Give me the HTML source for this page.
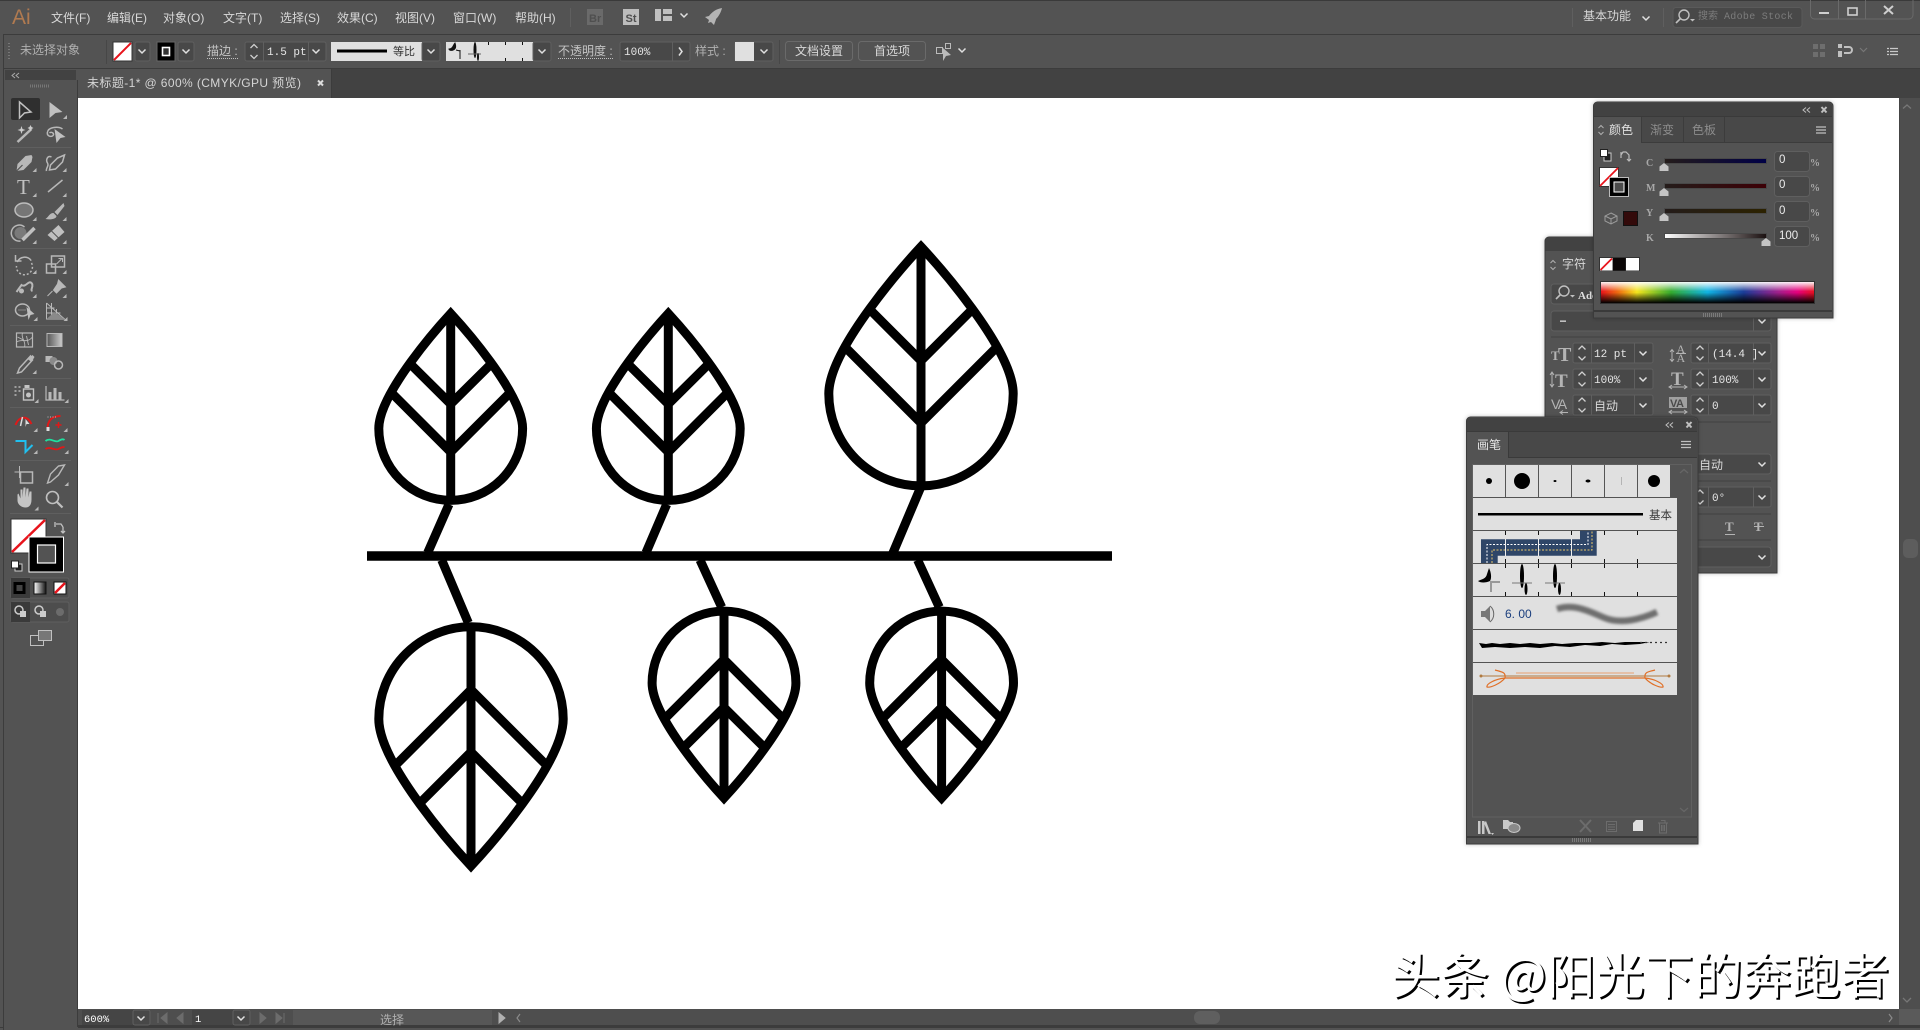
<!DOCTYPE html>
<html lang="zh-CN"><head><meta charset="utf-8"><title>Illustrator</title>
<style>
html,body{margin:0;padding:0;width:1920px;height:1030px;overflow:hidden;background:#535353}
svg{display:block;position:absolute;left:0;top:0}
text{font-family:"Liberation Sans","Noto Sans CJK SC",sans-serif;font-size:12px;fill:#d8d8d8}
.g{fill:#b0b0b0}
.d{fill:#8c8c8c}
.o{font-family:"Liberation Mono","Noto Sans CJK SC",monospace;font-size:11px;fill:#e6e6e6}
.v{font-size:11.5px;fill:#ececec}
.l{font-family:"Liberation Serif",serif;font-size:10px;font-weight:bold;fill:#a8a8a8}
.b{fill:#484848;stroke:#5f5f5f;stroke-width:1}
.s{fill:none;stroke:#b8b8b8;stroke-width:1.5}
.f{fill:#b8b8b8}
.leaf{fill:none;stroke:#000;stroke-width:9;stroke-miterlimit:10}
.wm{font-family:"Noto Sans CJK SC",sans-serif;font-size:49px;fill:#fff}
</style></head><body>
<svg width="1920" height="1030" viewBox="0 0 1920 1030" xmlns="http://www.w3.org/2000/svg">
<defs>
<path id="c" d="M-3.5,-1.5L0,2L3.5,-1.5" fill="none" stroke="#e0e0e0" stroke-width="1.5"/>
<g id="st"><path d="M-3.5,-3.5L0,-7L3.5,-3.5" fill="none" stroke="#d0d0d0" stroke-width="1.3"/><path d="M-3.5,3.5L0,7L3.5,3.5" fill="none" stroke="#d0d0d0" stroke-width="1.3"/></g>
<path id="t" d="M4,0V4H0Z" fill="#b8b8b8"/>
<g id="hb"><path d="M0,0.5H10M0,3.5H10M0,6.5H10" stroke="#c0c0c0" stroke-width="1.2" fill="none"/></g>
<g id="ud"><path d="M-2.5,-2L0,-4.5L2.5,-2M-2.5,2L0,4.5L2.5,2" fill="none" stroke="#b0b0b0" stroke-width="1"/></g>
<g id="mag"><circle cx="0" cy="0" r="5" fill="none" stroke="#c0c0c0" stroke-width="1.4"/><path d="M-3.5,3.5L-8,8" stroke="#c0c0c0" stroke-width="1.6"/><path d="M6,4h5l-2.5,2.5z" fill="#c0c0c0"/></g>
<g id="thumb"><path d="M0,0L4.5,3.5V8H-4.5V3.5Z" fill="#c4c4c4"/></g>
<g id="lm" class="leaf">
<path d="M450.7 313.5C441 324 378.8 393 378.8 428.5A71.9 71.9 0 0 0 522.6 428.5C522.6 393 460.4 324 450.7 313.5Z"/>
<path d="M450.7 313.5V500M411.7 365.3L450.7 404L489.7 365.3M391.7 393L450.7 452L509.7 393"/>
</g>
<g id="lb" class="leaf">
<path d="M471 866C458 852 378.8 764.500 378.8 719A92.2 92.2 0 0 1 563.2 719C563.2 764.500 484 852 471 866Z"/>
<path d="M471 866V627M396.7 764L471 689.7L545.3 764M421 802L471 752L521 802"/>
</g>
<linearGradient id="gC"><stop offset="0" stop-color="#241c1a"/><stop offset="1" stop-color="#000046"/></linearGradient>
<linearGradient id="gM"><stop offset="0" stop-color="#241c1a"/><stop offset="1" stop-color="#3c0006"/></linearGradient>
<linearGradient id="gY"><stop offset="0" stop-color="#241c1a"/><stop offset="1" stop-color="#2c2200"/></linearGradient>
<linearGradient id="gK"><stop offset="0" stop-color="#fff"/><stop offset="1" stop-color="#1a1010"/></linearGradient>
<linearGradient id="hue"><stop offset="0" stop-color="#e8101c"/><stop offset=".08" stop-color="#f06a10"/><stop offset=".17" stop-color="#f5e61e"/><stop offset=".33" stop-color="#35ac2f"/><stop offset=".5" stop-color="#10b4e4"/><stop offset=".67" stop-color="#1b3c98"/><stop offset=".83" stop-color="#a0208c"/><stop offset=".92" stop-color="#e6007e"/><stop offset="1" stop-color="#e8101c"/></linearGradient>
<linearGradient id="vw" x2="0" y2="1"><stop offset="0" stop-color="#fff" stop-opacity=".95"/><stop offset=".45" stop-color="#fff" stop-opacity="0"/><stop offset=".5" stop-color="#000" stop-opacity="0"/><stop offset="1" stop-color="#000"/></linearGradient>
<linearGradient id="gr"><stop offset="0" stop-color="#555"/><stop offset="1" stop-color="#ccc"/></linearGradient>
<linearGradient id="gr2"><stop offset="0" stop-color="#fff"/><stop offset="1" stop-color="#111"/></linearGradient>
<filter id="bl" x="-5%" y="-50%" width="110%" height="200%"><feGaussianBlur stdDeviation="1.3"/></filter>
<filter id="ps" x="-20%" y="-20%" width="140%" height="140%"><feDropShadow dx="0" dy="0" stdDeviation="2" flood-color="#000" flood-opacity=".25"/></filter>
</defs>

<!-- window chrome -->
<rect width="1920" height="1030" fill="#535353"/>
<rect x="0" y="0" width="1920" height="1" fill="#3a3a3a"/>
<rect x="3" y="34" width="1917" height="1" fill="#3c3c3c"/>
<rect x="3" y="68" width="1917" height="1" fill="#3c3c3c"/>
<rect x="78" y="69" width="1842" height="29" fill="#424242"/>
<rect x="78" y="69" width="253" height="29" fill="#535353"/>
<rect x="331" y="69" width="1" height="29" fill="#3c3c3c"/>
<rect x="3" y="34" width="1" height="996" fill="#3c3c3c"/>
<rect x="0" y="1027" width="1920" height="1" fill="#3c3c3c"/>

<!-- menu -->
<text x="12" y="24" style="font-size:21px;font-family:'Liberation Sans';fill:#b07a50">Ai</text>
<text x="51" y="22">文件(F)</text><text x="107" y="22">编辑(E)</text><text x="163" y="22">对象(O)</text><text x="223" y="22">文字(T)</text><text x="280" y="22">选择(S)</text><text x="337" y="22">效果(C)</text><text x="395" y="22">视图(V)</text><text x="453" y="22">窗口(W)</text><text x="515" y="22">帮助(H)</text>
<rect x="570" y="8" width="1" height="19" fill="#5f5f5f"/>
<rect x="587" y="9" width="16" height="16" fill="#6a6a6a"/><text x="589" y="22" style="font-size:11px;font-weight:bold;fill:#4f4f4f">Br</text>
<rect x="623" y="9" width="16" height="16" fill="#bdbdbd"/><text x="625.500" y="22" style="font-size:11px;font-weight:bold;fill:#4f4f4f">St</text>
<path d="M655,9h6v12h-6zM663,9h9v5h-9zM663,16h9v5h-9z" fill="#c0c0c0"/><use href="#c" x="684" y="15"/>
<path d="M722,8C716,9 712,12 709,16L705,17L709,20L708,23L711,22L714,25C715,22 716,20 716,19C719,16 721,12 722,8Z" fill="#b4b4b4"/>
<rect x="1572" y="8" width="1" height="19" fill="#5f5f5f"/>
<text x="1583" y="20">基本功能</text><use href="#c" x="1646" y="18"/>
<rect x="1663" y="8" width="1" height="19" fill="#5f5f5f"/>
<rect x="1673" y="7.500" width="129" height="20" rx="3" fill="#484848" stroke="#5a5a5a"/>
<use href="#mag" x="1684" y="15"/>
<text x="1698" y="19" style="font-size:10px;fill:#7c7c7c">搜索</text><text x="1724" y="19" class="o" style="font-size:10px;fill:#7c7c7c;letter-spacing:.3px">Adobe Stock</text>
<path d="M1810.500,0V15a4,4 0 0 0 4,4H1909a4,4 0 0 0 4,-4V0" fill="none" stroke="#6a6a6a"/>
<path d="M1838.500,0V19M1865.500,0V19" stroke="#6a6a6a"/>
<rect x="1819" y="12" width="10" height="2" fill="#cfcfcf"/>
<rect x="1848" y="8" width="9" height="7" fill="none" stroke="#cfcfcf" stroke-width="1.6"/>
<path d="M1884,6L1893,14M1893,6L1884,14" stroke="#cfcfcf" stroke-width="2"/>

<!-- control bar -->
<path d="M9,43V60" stroke="#777" stroke-width="2" stroke-dasharray="1 2"/>
<text x="20" y="54" class="g">未选择对象</text>
<rect x="106" y="40" width="1" height="24" fill="#474747"/>
<rect x="113" y="42" width="19" height="19" fill="#fff" stroke="#333"/><path d="M114,60L131,43" stroke="#e8141c" stroke-width="2"/>
<rect x="135" y="42" width="15" height="19" rx="2" class="b"/><use href="#c" x="142" y="51"/>
<rect x="157" y="42" width="18" height="19" fill="#000" stroke="#666"/><rect x="162.500" y="47.500" width="7" height="8" fill="#333" stroke="#fff" stroke-width="1.6"/>
<rect x="178" y="42" width="16" height="19" rx="2" class="b"/><use href="#c" x="186" y="51"/>
<text x="207" y="55" style="fill:#c4c4c4">描边 :</text><path d="M207,58.500H239" stroke="#c0c0c0" stroke-dasharray="1 1"/>
<rect x="245" y="42" width="81" height="19" rx="2" class="b"/><path d="M263.500,42V61M308.500,42V61" stroke="#5f5f5f"/>
<use href="#st" x="254" y="51.500"/><text x="267" y="55" class="o">1.5 pt</text><use href="#c" x="316" y="51"/>
<rect x="331" y="42" width="91" height="19" fill="#e0e0e0"/><rect x="337" y="49.500" width="50" height="3" fill="#000"/><text x="393" y="55" style="fill:#333;font-size:11px">等比</text>
<rect x="422" y="42" width="18" height="19" rx="2" class="b"/><use href="#c" x="431" y="51"/>
<rect x="446" y="42" width="87" height="19" fill="#e0e0e0"/>
<path d="M449,49C453,49 453,45 455,43C456,46 456,49 453,50C451,51 449,50 449,49ZM456,50L460,51M460,50V59" stroke="#111" fill="#111"/>
<ellipse cx="475" cy="50" rx="1.500" ry="8" fill="#111"/><path d="M468,54H481" stroke="#666"/><ellipse cx="478" cy="57" rx="1" ry="4" fill="#111"/>
<path d="M505.500,42V45M505.500,58V61M488.500,42V45M522.500,42V45M522.500,58V61" stroke="#111"/>
<rect x="533" y="42" width="18" height="19" rx="2" class="b"/><use href="#c" x="542" y="51"/>
<text x="558" y="55" style="fill:#c4c4c4">不透明度 :</text><path d="M558,58.500H614" stroke="#c0c0c0" stroke-dasharray="1 1"/>
<rect x="620" y="42" width="70" height="19" rx="2" class="b"/><path d="M672.500,42V61" stroke="#5f5f5f"/>
<text x="624" y="55" class="o">100%</text><path d="M679,47.500L682,51.500L679,55.500" fill="none" stroke="#e0e0e0" stroke-width="1.500"/>
<text x="695" y="55" class="g">样式 :</text>
<rect x="735" y="42" width="38" height="19" rx="2" class="b"/><rect x="735" y="42" width="19" height="19" fill="#e0e0e0"/><use href="#c" x="764" y="51"/>
<rect x="779" y="40" width="1" height="24" fill="#474747"/>
<rect x="785.500" y="41.500" width="67" height="19" rx="3" fill="none" stroke="#6a6a6a"/><text x="795" y="55">文档设置</text>
<rect x="858.500" y="41.500" width="67" height="19" rx="3" fill="none" stroke="#6a6a6a"/><text x="874" y="55">首选项</text>
<path d="M936.500,47.500h6v6h-6zM945.500,43.500h5v5h-5z" fill="none" stroke="#bbb"/><path d="M943,48L951,55L946,56L943,61Z" fill="#bbb"/><use href="#c" x="962" y="50"/>
<path d="M1813,44h5v5h-5zM1820,44h5v5h-5zM1813,52h5v5h-5zM1820,52h5v5h-5z" fill="#6e6e6e"/>
<path d="M1838,44h4v4h-4zM1838,51h4v3h-4zM1838,54h4v3h-4z" fill="#c0c0c0"/><path d="M1844,47h5a3,3 0 0 1 0,6h-5" fill="none" stroke="#c0c0c0" stroke-width="2"/>
<path d="M1860,48L1863.500,51.500L1867,48" fill="none" stroke="#777" stroke-width="1.200"/>
<path d="M1890,48.500H1898M1890,51.500H1898M1890,54.500H1898M1887,48.500H1889M1887,51.500H1889M1887,54.500H1889" stroke="#c8c8c8" stroke-width="1.300"/>

<!-- tab -->
<text x="87" y="87" textLength="214" lengthAdjust="spacing" style="fill:#d4d4d4">未标题-1* @ 600% (CMYK/GPU 预览)</text>
<path d="M318,80.500L323,85.500M323,80.500L318,85.500" stroke="#ddd" stroke-width="2"/>

<!-- canvas -->
<rect x="78" y="98" width="1822" height="911" fill="#fff"/>
<path d="M367,556H1112" stroke="#000" stroke-width="9.400" fill="none"/>
<path d="M449,504.300L427.700,552.700M666.700,504.300L646,552.700M920.800,487L892.700,553.500M441.700,560L468.300,622.700M700,560L721.700,607.300M917.600,560L939.300,607.300" stroke="#000" stroke-width="9" fill="none"/>
<use href="#lm"/>
<use href="#lm" transform="translate(217.600 0)"/>
<use href="#lb" transform="matrix(1 0 0 -1 450 1112.700)"/>
<use href="#lb"/>
<use href="#lm" transform="matrix(1 0 0 -1 273.300 1111.500)"/>
<use href="#lm" transform="matrix(1 0 0 -1 490.900 1111.500)"/>
<text x="1393" y="995.500" class="wm" style="fill:#000">头条 @阳光下的奔跑者</text>
<text x="1391" y="993.500" class="wm">头条 @阳光下的奔跑者</text>

<!-- left toolbar -->
<rect x="5" y="70" width="71" height="10" fill="#424242"/>
<path d="M15,73L12,75.500L15,78M19,73L16,75.500L19,78" fill="none" stroke="#aaa"/>
<rect x="4" y="80" width="74" height="950" fill="#535353"/>
<rect x="77" y="80" width="1" height="947" fill="#3c3c3c"/>
<path d="M30,86H50" stroke="#777" stroke-width="3" stroke-dasharray="1 1"/>
<rect x="11" y="98" width="29" height="22" rx="2" fill="#2f2f2f"/>
<path d="M10,147.500H71M10,248.500H71M10,325.500H71M10,378.500H71M10,407.500H71M10,460.500H71M10,513.500H71" stroke="#5f5f5f"/>
<g transform="translate(-1.500 0)">
<path d="M21,102L32.500,112L26,113L21,118Z" fill="none" stroke="#c0c0c0" stroke-width="1.500"/>
<path d="M51,102L64,112L57,113L51,118Z" fill="#c0c0c0"/><use href="#t" x="64.500" y="115"/>
<!-- wand -->
<path d="M19,142L33,129" stroke="#b8b8b8" stroke-width="2.500"/><path d="M23,126l1,3l3,1l-3,1l-1,3l-1,-3l-3,-1l3,-1zM32,125l1,2l2,1l-2,1l-1,2l-1,-2l-2,-1l2,-1z" fill="#ccc"/>
<!-- lasso -->
<path d="M64,129C60,126 50,127 49,132C48,136 52,137 54,136C57,134 53,131 51,133" class="s"/><path d="M56,129L67,137L62,138L58,143Z" fill="#c0c0c0"/>
<!-- pen -->
<path d="M33,155L27,156L19,164L18,171L25,170L33,162L34,157Z" fill="#b8b8b8"/><path d="M18,171L24,165" stroke="#535353" stroke-width="1.200"/><use href="#t" x="34" y="168"/>
<path d="M66,155L59,158L52,165L51,170L57,169L64,162Z" fill="none" stroke="#b8b8b8" stroke-width="1.500"/><path d="M53,157C49,155 47,160 49,163C51,166 47,168 48,171" class="s"/><use href="#t" x="64" y="168"/>
<!-- T & line -->
<text x="18.500" y="194" style="font-family:'Liberation Serif';font-size:21px;fill:#c0c0c0">T</text><use href="#t" x="34" y="193"/>
<path d="M49.500,192L64,180" stroke="#b8b8b8" stroke-width="1.500"/><use href="#t" x="64" y="193"/>
<!-- ellipse, brush -->
<ellipse cx="25.500" cy="210" rx="9" ry="7" fill="#767676" stroke="#bdbdbd" stroke-width="1.500"/><use href="#t" x="34" y="217"/>
<path d="M65,203L56,212L59,215L66,206ZM55,213C51,213 50,217 47,219C52,220 58,219 58,216Z" fill="#b8b8b8"/><use href="#t" x="64" y="217"/>
<!-- shaper, eraser -->
<path d="M26,227A8,8 0 1 0 22,241" class="s"/><circle cx="22" cy="233" r="6" fill="#7a7a7a"/><path d="M24,240L36,228" stroke="#c0c0c0" stroke-width="3.500"/><use href="#t" x="34" y="240"/>
<path d="M60,225L66,232L56,241L49,235Z" fill="#c0c0c0"/><path d="M53,231L60,238" stroke="#535353"/><use href="#t" x="64" y="240"/>
<!-- rotate scale -->
<path d="M19,261A8,8 0 0 1 33,262" class="s" transform="rotate(-10 25 263)"/><path d="M33,263A8,8 0 1 1 18,266" fill="none" stroke="#b8b8b8" stroke-width="1.500" stroke-dasharray="2 2"/><path d="M17,255V261H23" class="s"/><use href="#t" x="34" y="270"/>
<rect x="48" y="264" width="9" height="9" class="s"/><rect x="53" y="256" width="13" height="11" class="s"/><path d="M58,264L63,259M60,258.500H64V262" stroke="#b8b8b8" fill="none"/><use href="#t" x="64" y="270"/>
<!-- width, pin -->
<path d="M18,292L23,285C27,288 30,280 33,283C36,286 31,290 34,291" fill="none" stroke="#b8b8b8" stroke-width="2"/><circle cx="23" cy="291" r="2.500" fill="#b8b8b8"/><use href="#t" x="34" y="294"/>
<path d="M60,280L67,287L63,288L58,293L55,290L59,284ZM54,291L49,296" fill="#b8b8b8" stroke="#b8b8b8"/><use href="#t" x="64" y="294"/>
<!-- free transform, perspective -->
<ellipse cx="24" cy="310" rx="7" ry="6" class="s"/><path d="M20,310h7" stroke="#b8b8b8" stroke-dasharray="1 1"/><path d="M28,307L36,314L32,315L30,320Z" fill="#c0c0c0"/><use href="#t" x="35" y="317"/>
<path d="M48,303V319H66L48,303M48,308H56M48,313H62M53,303V319M58,309V319" fill="none" stroke="#b8b8b8"/><path d="M48,319L66,319L56,312Z" fill="#8a8a8a"/><use href="#t" x="65" y="317"/>
<!-- mesh gradient -->
<rect x="18" y="333" width="16" height="14" fill="none" stroke="#b8b8b8" stroke-width="1.200"/><path d="M18,342C24,338 28,344 34,337M24,333C22,338 28,342 26,347M19,337L25,340M28,336L30,345" fill="none" stroke="#b8b8b8" stroke-width=".9"/>
<rect x="48.500" y="333.500" width="15" height="13" fill="url(#gr)" stroke="#b8b8b8"/>
<!-- eyedropper blend -->
<path d="M32,356L21,368L19,373L23,372L34,360Z" fill="none" stroke="#b8b8b8" stroke-width="1.500"/><path d="M29,359L34,355L36,357L33,362Z" fill="#b8b8b8"/><use href="#t" x="34" y="370"/>
<rect x="47" y="356" width="7" height="6" fill="#b8b8b8"/><circle cx="55" cy="361" r="4" fill="#8a8a8a"/><circle cx="60" cy="365" r="4" fill="none" stroke="#b8b8b8" stroke-width="1.500"/>
<!-- spray graph -->
<path d="M16,387h2M20,387h2M16,391h2M20,391h2M16,395h2" stroke="#b8b8b8" stroke-width="1.500"/><path d="M26,385h5v3h-5z" fill="#c4c4c4"/><rect x="25" y="389" width="10" height="11" fill="none" stroke="#c4c4c4" stroke-width="1.400"/><circle cx="30" cy="395" r="2.500" fill="#c4c4c4"/><use href="#t" x="36" y="399"/>
<path d="M47.500,386V400H66" fill="none" stroke="#b8b8b8" stroke-width="1.200"/><path d="M50,392h3v8h-3zM55,388h3v12h-3zM60,392h3v8h-3z" fill="#b8b8b8"/><use href="#t" x="66" y="399"/>
<!-- coloured -->
<path d="M17,425C20,417 28,414 33,424" fill="none" stroke="#e01818" stroke-width="2"/><path d="M22,426L24,417" stroke="#ddd" stroke-width="1.500"/><path d="M27,419L31,424L28,424L27,427Z" fill="#ddd"/><use href="#t" x="35" y="428"/>
<path d="M49,429C49,420 54,416 62,416" fill="none" stroke="#e01818" stroke-width="2"/><path d="M49,417h10" stroke="#bbb" stroke-dasharray="1 1.500"/><rect x="48" y="427" width="3" height="4" fill="#ddd"/><path d="M60,422v6M57,425h6" stroke="#e01818" stroke-width="1.500"/><use href="#t" x="65" y="428"/>
<path d="M17,441H27V452L34,445" fill="none" stroke="#20c0f0" stroke-width="2"/><use href="#t" x="35" y="450"/>
<path d="M47,441C52,437 56,443 60,441C63,439 65,439 66,440" fill="none" stroke="#20e0a0" stroke-width="1.800"/><path d="M47,449C52,446 56,451 60,449C63,447 65,447 66,447" fill="none" stroke="#e01818" stroke-width="1.800"/><use href="#t" x="66" y="450"/>
<!-- artboard slice -->
<path d="M16,472H26M21,466V478" stroke="#b8b8b8"/><rect x="22" y="472" width="12" height="11" class="s"/>
<path d="M66,465L60,475L52,482L49,483L52,474L60,466Z" fill="none" stroke="#b8b8b8" stroke-width="1.400"/><use href="#t" x="66" y="482"/>
<!-- hand zoom -->
<g transform="translate(0 1.500)">
<path d="M19,493V499C19,503 23,506 27,506C31,506 33,503 33,498V490L31,490L30,496V487L28,487L27,496V486L25,486L24,496V488L22,488L22,497L20,492Z" fill="#c4c4c4"/><use href="#t" x="36" y="505"/>
<circle cx="54" cy="496" r="6" fill="none" stroke="#c0c0c0" stroke-width="1.600"/><path d="M58.500,500.500L64,506" stroke="#c0c0c0" stroke-width="2.200"/>
</g>
</g>
<!-- fill & stroke -->
<rect x="11" y="519" width="35" height="34" fill="#fff" stroke="#333"/><path d="M12,552L45,520" stroke="#e8141c" stroke-width="2.500"/>
<rect x="29" y="537" width="34.500" height="35" fill="#000" stroke="#fff" stroke-width="1"/>
<rect x="37.500" y="545" width="18" height="18" fill="#535353" stroke="#fff" stroke-width="1.200"/>
<path d="M56,524h5l2,3M63,527v6m-2,-2l2,2l2,-2M55,522v5" fill="none" stroke="#c0c0c0" stroke-width="1.300"/>
<rect x="15" y="564" width="7" height="7" fill="#222" stroke="#ccc"/><rect x="11.500" y="561" width="7" height="7" fill="#fff" stroke="#222"/>
<rect x="11" y="578" width="58" height="20" rx="2" fill="#4d4d4d" stroke="#5f5f5f"/>
<rect x="11" y="578" width="19" height="20" fill="#3a3a3a"/><rect x="13.500" y="582" width="12" height="12" fill="#000"/><rect x="16.500" y="585" width="6" height="6" fill="#444"/>
<rect x="34" y="582" width="12" height="12" fill="url(#gr2)" stroke="#111"/>
<rect x="54" y="582" width="12" height="12" fill="#fff" stroke="#111"/><path d="M55,593L65,583" stroke="#e8141c" stroke-width="2.500"/>
<rect x="11" y="602" width="58" height="20" rx="2" fill="#4d4d4d" stroke="#5f5f5f"/>
<rect x="11" y="602" width="19" height="20" fill="#3a3a3a"/>
<circle cx="19" cy="610" r="4" fill="none" stroke="#ccc" stroke-width="1.500"/><rect x="20" y="611" width="6" height="6" fill="#ccc"/>
<circle cx="39" cy="610" r="4" fill="none" stroke="#ccc" stroke-width="1.500"/><rect x="40" y="611" width="6" height="6" fill="#ccc"/>
<circle cx="60" cy="612" r="4" fill="#6c6c6c"/>
<rect x="30.500" y="635.500" width="13" height="10" fill="#535353" stroke="#c0c0c0"/><rect x="38.500" y="630.500" width="13" height="10" fill="#777" stroke="#c0c0c0"/>

<!-- scrollbars -->
<rect x="1900" y="98" width="20" height="929" fill="#4e4e4e"/>
<rect x="1899" y="98" width="1" height="911" fill="#444"/>
<path d="M1903,108.500L1907,105L1911,108.500" fill="none" stroke="#777" stroke-width="1.300"/>
<rect x="1903" y="539" width="15" height="19" rx="5" fill="#5d5d5d"/>
<path d="M1903,998L1907,1002L1911,998" fill="none" stroke="#777" stroke-width="1.300"/>
<rect x="78" y="1009" width="1842" height="16" fill="#4e4e4e"/>
<rect x="78" y="1025" width="1842" height="2" fill="#3c3c3c"/>
<rect x="82" y="1010" width="51" height="15" fill="#454545"/><text x="84" y="1022" class="o" style="font-size:10.500px;fill:#fff">600%</text>
<rect x="133" y="1010" width="17" height="15" rx="2" class="b"/><use href="#c" x="141" y="1018"/>
<path d="M158,1013V1023M167,1013L161,1018L167,1023ZM183,1013L177,1018L183,1023Z" fill="#6c6c6c" stroke="#6c6c6c"/>
<rect x="192" y="1010" width="41" height="15" fill="#454545"/><text x="195" y="1022" class="o" style="font-size:10.500px;fill:#fff">1</text>
<rect x="233" y="1010" width="17" height="15" rx="2" class="b"/><use href="#c" x="241" y="1018"/>
<path d="M260,1013L266,1018L260,1023ZM276,1013L282,1018L276,1023ZM284,1013V1023" fill="#6c6c6c" stroke="#6c6c6c"/>
<rect x="293" y="1010" width="199" height="15" fill="#575757"/><text x="380" y="1024" class="g" style="font-size:12px">选择</text>
<path d="M499,1013L505,1018L499,1023Z" fill="#b0b0b0" stroke="#b0b0b0"/>
<path d="M520,1014L517,1018L520,1022" fill="none" stroke="#8a8a8a" stroke-width="1.200"/>
<rect x="1194" y="1011" width="26" height="13" rx="6" fill="#5f5f5f"/>
<path d="M1889,1014L1892,1018L1889,1022" fill="none" stroke="#8a8a8a" stroke-width="1.200"/>
<rect x="1899" y="1009" width="21" height="16" fill="#5a5a5a"/>

<!-- character panel -->
<g filter="url(#ps)"><path d="M1545,573V241a4,4 0 0 1 4,-4H1777V573Z" fill="#535353" stroke="#3a3a3a"/></g>
<path d="M1545.500,251V241a4,4 0 0 1 4,-4H1600V251Z" fill="#424242"/>
<use href="#ud" x="1553" y="265"/><text x="1562" y="268">字符</text>
<rect x="1551" y="284" width="60" height="20" rx="3" class="b"/>
<use href="#mag" x="1564" y="291"/><text x="1578" y="299" style="font-family:'Liberation Serif';font-weight:bold;font-size:11px;fill:#e0e0e0">Adc</text>
<rect x="1551" y="311" width="220" height="20" rx="3" class="b"/><path d="M1753.500,311V331" stroke="#5f5f5f"/><rect x="1560" y="320.500" width="6" height="1.300" fill="#ddd"/><use href="#c" x="1762" y="321"/>
<rect x="1551" y="336" width="220" height="2" fill="#4a4a4a"/>
<!-- stepper rows -->
<g>
<rect x="1573" y="343" width="80" height="20" rx="2" class="b"/><rect x="1691" y="343" width="80" height="20" rx="2" class="b"/>
<rect x="1573" y="369" width="80" height="20" rx="2" class="b"/><rect x="1691" y="369" width="80" height="20" rx="2" class="b"/>
<rect x="1573" y="395" width="80" height="20" rx="2" class="b"/><rect x="1691" y="395" width="80" height="20" rx="2" class="b"/>
<path d="M1591.500,343V363M1634.500,343V363M1708.500,343V363M1753.500,343V363M1591.500,369V389M1634.500,369V389M1708.500,369V389M1753.500,369V389M1591.500,395V415M1634.500,395V415M1708.500,395V415M1753.500,395V415" stroke="#5f5f5f"/>
<use href="#st" x="1582" y="353"/><use href="#st" x="1700" y="353"/><use href="#st" x="1582" y="379"/><use href="#st" x="1700" y="379"/><use href="#st" x="1582" y="405"/><use href="#st" x="1700" y="405"/>
<use href="#c" x="1643" y="353"/><use href="#c" x="1762" y="353"/><use href="#c" x="1643" y="379"/><use href="#c" x="1762" y="379"/><use href="#c" x="1643" y="405"/><use href="#c" x="1762" y="405"/>
</g>
<text x="1594" y="357" class="o">12 pt</text><text x="1712" y="357" class="o">(14.4 ]</text>
<text x="1594" y="383" class="o">100%</text><text x="1712" y="383" class="o">100%</text>
<text x="1594" y="410" style="font-size:12px">自动</text><text x="1712" y="409" class="o">0</text>
<!-- char icons -->
<text x="1551" y="360" style="font-family:'Liberation Serif';font-weight:bold;font-size:13px;fill:#b4b4b4">T</text><text x="1558" y="361" style="font-family:'Liberation Serif';font-weight:bold;font-size:20px;fill:#b4b4b4">T</text>
<path d="M1552,372V387M1550,375L1552,372L1554,375M1550,384L1552,387L1554,384" fill="none" stroke="#b4b4b4"/><text x="1555" y="387" style="font-family:'Liberation Serif';font-weight:bold;font-size:19px;fill:#b4b4b4">T</text>
<text x="1551" y="409" style="font-size:14px;fill:#b4b4b4;letter-spacing:-1.500px">VA</text><path d="M1560,412.500H1568M1563,410.500L1560,412.500L1563,414.500" fill="none" stroke="#b4b4b4"/>
<text x="1676.500" y="353" style="font-family:'Liberation Serif';font-size:12px;fill:#b4b4b4">A</text><text x="1676.500" y="362" style="font-family:'Liberation Serif';font-size:12px;fill:#b4b4b4">A</text><path d="M1676,353.500H1686M1672,350V361M1670,352L1672,349.500L1674,352M1670,359L1672,361.500L1674,359" stroke="#b4b4b4" fill="none"/>
<text x="1671" y="385" style="font-family:'Liberation Serif';font-weight:bold;font-size:19px;fill:#b4b4b4">T</text><path d="M1670,387H1686M1672,385L1669,387L1672,389M1684,385L1687,387L1684,389" fill="none" stroke="#b4b4b4"/>
<rect x="1669" y="397" width="18" height="11" fill="#a0a0a0"/><text x="1670" y="407" style="font-size:11px;font-weight:bold;fill:#4a4a4a;letter-spacing:-.5px">VA</text><path d="M1670,412H1686M1672,410L1669,412L1672,414M1684,410L1687,412L1684,414" fill="none" stroke="#b4b4b4"/>
<rect x="1551" y="421" width="220" height="2" fill="#4a4a4a"/>
<rect x="1690" y="454" width="81" height="20" rx="3" class="b"/><text x="1699" y="469">自动</text><use href="#c" x="1762" y="464"/>
<rect x="1690" y="480" width="81" height="2" fill="#4a4a4a"/>
<rect x="1690" y="487" width="81" height="20" rx="2" class="b"/><path d="M1708.500,487V507M1753.500,487V507" stroke="#5f5f5f"/><use href="#st" x="1700" y="497"/><text x="1712" y="501" class="o">0°</text><use href="#c" x="1762" y="497"/>
<rect x="1690" y="513" width="81" height="2" fill="#4a4a4a"/>
<text x="1725" y="531" style="font-family:'Liberation Serif';font-weight:bold;font-size:13px;fill:#b4b4b4">T</text><path d="M1725,534.500H1735" stroke="#b4b4b4"/>
<text x="1754" y="531" style="font-family:'Liberation Serif';font-weight:bold;font-size:13px;fill:#b4b4b4">T</text><path d="M1754,526.500H1764" stroke="#b4b4b4"/>
<rect x="1690" y="539" width="81" height="2" fill="#4a4a4a"/>
<rect x="1690" y="547" width="81" height="20" rx="3" class="b"/><use href="#c" x="1762" y="557"/>

<!-- colour panel -->
<g filter="url(#ps)"><path d="M1593.500,318V106a4,4 0 0 1 4,-4H1829a4,4 0 0 1 4,4V318Z" fill="#535353" stroke="#3a3a3a"/></g>
<path d="M1594,116V106a3,3 0 0 1 3,-3H1829a3,3 0 0 1 3,3V116Z" fill="#424242"/>
<rect x="1594" y="116" width="238" height="1" fill="#3a3a3a"/>
<rect x="1641" y="117" width="191" height="25" fill="#484848"/>
<path d="M1641.500,117V142M1683.500,117V142M1724.500,117V142M1641,142.500H1832" stroke="#3c3c3c"/>
<path d="M1810,107.500L1807,110L1810,112.500M1806,107.500L1803,110L1806,112.500" fill="none" stroke="#c0c0c0"/>
<path d="M1821.500,107L1826.500,112.500M1826.500,107L1821.500,112.500" stroke="#c0c0c0" stroke-width="2"/>
<use href="#ud" x="1601" y="130"/><text x="1609" y="134" style="fill:#e0e0e0">颜色</text><text x="1650" y="134" class="d">渐变</text><text x="1692" y="134" class="d">色板</text>
<use href="#hb" x="1816" y="126.500"/>
<rect x="1604" y="153" width="7" height="8" fill="#222" stroke="#ccc"/><rect x="1600.500" y="149.500" width="7" height="7" fill="#fff" stroke="#222"/>
<path d="M1621,155l2,-3h3l3,3v6m-2,-2l2,2l2,-2M1621,152v6" fill="none" stroke="#bbb" stroke-width="1.200"/>
<rect x="1599.500" y="167.500" width="19" height="19" fill="#fff" stroke="#333"/><path d="M1600,186L1618,168" stroke="#e8141c" stroke-width="1.800"/>
<rect x="1609.500" y="177.500" width="19" height="19" fill="#000" stroke="#bbb"/><rect x="1614" y="182" width="10" height="10" fill="#4c4c4c" stroke="#fff"/>
<path d="M1611,213L1617,216V221L1611,224L1605,221V216ZM1605,216L1611,219L1617,216M1611,219V224" fill="none" stroke="#9c9c9c"/>
<rect x="1623.500" y="211.500" width="14" height="14" fill="#330a0a" stroke="#111" stroke-width="1"/>
<text x="1646" y="166" class="l">C</text><text x="1646" y="191" class="l">M</text><text x="1646" y="216" class="l">Y</text><text x="1646" y="241" class="l">K</text>
<rect x="1664.500" y="158.500" width="102" height="5" fill="url(#gC)" stroke="#484848"/><rect x="1664.500" y="183.500" width="102" height="5" fill="url(#gM)" stroke="#484848"/><rect x="1664.500" y="208.500" width="102" height="5" fill="url(#gY)" stroke="#484848"/><rect x="1664.500" y="233.500" width="102" height="5" fill="url(#gK)" stroke="#484848"/>
<use href="#thumb" x="1664" y="163"/><use href="#thumb" x="1664" y="188"/><use href="#thumb" x="1664" y="213"/><use href="#thumb" x="1766" y="238"/>
<rect x="1774.500" y="151.500" width="35" height="20" rx="3" class="b"/><rect x="1774.500" y="176.500" width="35" height="20" rx="3" class="b"/><rect x="1774.500" y="201.500" width="35" height="20" rx="3" class="b"/><rect x="1774.500" y="226.500" width="35" height="20" rx="3" class="b"/>
<text x="1779" y="163" class="v">0</text><text x="1779" y="188" class="v">0</text><text x="1779" y="214" class="v">0</text><text x="1779" y="239" class="v">100</text>
<text x="1810" y="166" class="l">%</text><text x="1810" y="191" class="l">%</text><text x="1810" y="216" class="l">%</text><text x="1810" y="241" class="l">%</text>
<rect x="1599.500" y="257.500" width="40" height="13" fill="#333" stroke="#333"/><rect x="1600" y="258" width="12.500" height="12.500" fill="#fff"/><path d="M1600.500,270L1612,258.500" stroke="#e8141c" stroke-width="1.800"/><rect x="1613" y="258" width="12.500" height="12.500" fill="#0a0606"/><rect x="1626" y="258" width="13" height="12.500" fill="#fff"/>
<rect x="1600.500" y="281.500" width="214" height="22" fill="url(#hue)" stroke="#333"/><rect x="1601" y="282" width="213" height="21" fill="url(#vw)"/>
<rect x="1594" y="310" width="238" height="2" fill="#3a3a3a"/>
<path d="M1703,315H1722" stroke="#7a7a7a" stroke-width="4" stroke-dasharray="1 1"/>

<!-- brushes panel -->
<g filter="url(#ps)"><path d="M1466.500,844V421a4,4 0 0 1 4,-4H1694a4,4 0 0 1 4,4V844Z" fill="#535353" stroke="#3a3a3a"/></g>
<path d="M1467,431V421a3,3 0 0 1 3,-3H1694a3,3 0 0 1 3,3V431Z" fill="#424242"/>
<rect x="1508" y="432" width="189" height="25" fill="#484848"/>
<path d="M1467,431.500H1697M1508.500,432V457M1508,457.500H1697" stroke="#3a3a3a"/>
<path d="M1673,422.500L1670,425L1673,427.500M1669,422.500L1666,425L1669,427.500" fill="none" stroke="#c0c0c0"/>
<path d="M1686.500,422L1691.500,427.500M1691.500,422L1686.500,427.500" stroke="#c0c0c0" stroke-width="2"/>
<text x="1477" y="449" style="fill:#e6e6e6">画笔</text><use href="#hb" x="1681" y="441"/>
<rect x="1472.500" y="464.500" width="219" height="352.500" fill="none" stroke="#606060"/>
<path d="M1680,473L1684,469.500L1688,473" fill="none" stroke="#666" stroke-width="1.300"/>
<path d="M1680,808L1684,811.500L1688,808" fill="none" stroke="#666" stroke-width="1.300"/>
<rect x="1473" y="465" width="197" height="32" fill="#e0e0e0"/>
<path d="M1505.500,465V497M1538.500,465V497M1571.500,465V497M1604.500,465V497M1637.500,465V497" stroke="#555"/>
<circle cx="1489" cy="481" r="3" fill="#000"/><circle cx="1522" cy="481" r="8" fill="#000"/><ellipse cx="1555" cy="481" rx="1.500" ry="1" fill="#000"/><ellipse cx="1588" cy="481" rx="2.500" ry="1.500" fill="#000"/><rect x="1621" y="477" width=".8" height="8" fill="#aaa"/><circle cx="1654" cy="481" r="6" fill="#000"/>
<g fill="#e0e0e0"><rect x="1473" y="498" width="204" height="32"/><rect x="1473" y="531" width="204" height="32"/><rect x="1473" y="564" width="204" height="32"/><rect x="1473" y="597" width="204" height="32"/><rect x="1473" y="630" width="204" height="32"/><rect x="1473" y="663" width="204" height="32"/></g>
<rect x="1478" y="513" width="165" height="2.500" fill="#000"/><text x="1649" y="519" style="font-size:11.500px;fill:#3a3a3a">基本</text>
<path d="M1481,539.300H1580V530.700H1596.700V555.700H1497.700V563H1481Z" fill="#2f4668"/>
<path d="M1487,563V544.500H1588V531" fill="none" stroke="#fff" stroke-dasharray="2 1.500"/><path d="M1492,563V550H1592V531" fill="none" stroke="#e8c668" stroke-dasharray="2 1.500"/>
<path d="M1505.500,539V556M1538.500,539V556M1571.500,539V556" stroke="#eee"/>
<path d="M1505.500,531V535M1538.500,531V535M1571.500,531V535M1604.500,531V535M1637.500,531V535M1505.500,559V563M1538.500,559V563M1571.500,559V563M1604.500,559V563M1637.500,559V563M1505.500,564V568M1538.500,564V568M1571.500,564V568M1604.500,564V568M1637.500,564V568M1505.500,592V596M1538.500,592V596M1571.500,592V596M1604.500,592V596M1637.500,592V596" stroke="#111"/>
<path d="M1478,581C1482,579 1486,579 1487,574L1489,568C1491,572 1492,578 1490,581C1486,583 1480,583 1478,581Z" fill="#000"/><path d="M1490,582H1500M1491,582V592" stroke="#999" stroke-width="2" fill="none"/>
<ellipse cx="1522" cy="576" rx="2" ry="12" fill="#000"/><path d="M1512,583H1532" stroke="#777"/><ellipse cx="1526" cy="589" rx="1.500" ry="6" fill="#000"/>
<ellipse cx="1555" cy="576" rx="2" ry="12" fill="#000"/><path d="M1545,583H1565" stroke="#777"/><ellipse cx="1559.500" cy="589" rx="1.500" ry="6" fill="#000"/>
<path d="M1481,611h4l5,-5v16l-5,-5h-4Z" fill="#777"/><path d="M1490,606C1495,610 1495,618 1490,622" fill="#ddd" stroke="#666"/>
<text x="1505" y="618" style="font-size:12px;fill:#1b3f7e">6. 00</text>
<path d="M1557,609C1575,603 1590,612 1605,618C1620,624 1640,620 1657,612" fill="none" stroke="#6e6e6e" stroke-width="6.500" filter="url(#bl)"/>
<path d="M1479,643L1486,644L1492,643L1500,644L1510,643L1520,644L1530,643L1540,644L1552,643L1562,644L1575,643L1590,643L1602,642L1615,643L1625,642L1640,642L1650,642L1640,644L1625,645L1612,644L1600,646L1585,645L1570,647L1555,646L1540,648L1525,647L1510,648L1495,647L1482,648Z" fill="#000"/>
<path d="M1640,642.500H1670" stroke="#333" stroke-dasharray="2 3" stroke-width="1.200"/>
<path d="M1481,676H1669" stroke="#b07a40" stroke-width="1"/>
<path d="M1516,673H1634" stroke="#e8a070" stroke-width="1"/><path d="M1505,678H1645" stroke="#e07028" stroke-width="1.200"/>
<path d="M1505,678C1500,684 1490,688 1487,687C1486,684 1495,679 1505,678C1506,672 1502,672 1495,670M1645,678C1650,684 1660,688 1663,687C1664,684 1655,679 1645,678C1644,672 1648,672 1655,670" fill="none" stroke="#e07028" stroke-width="1.200"/>
<circle cx="1481" cy="676" r="1.500" fill="#b07a40"/><circle cx="1669" cy="676" r="1.500" fill="#b07a40"/>
<!-- brush panel bottom icons -->
<g transform="translate(0 -1)">
<path d="M1478,822h2.500v13h-2.500zM1482,822h2.500v13h-2.500zM1486,822l5,13h-2.500l-4.500,-11z" fill="#c8c8c8"/><path d="M1491,834h3l-1.500,2z" fill="#c8c8c8"/>
<path d="M1503,821h5l2,2h3v7h-10z" fill="#c8c8c8"/><ellipse cx="1514" cy="829" rx="6" ry="4.500" fill="#8a8a8a" stroke="#c8c8c8"/>
<path d="M1580,821L1591,833M1591,821L1580,833" stroke="#6c6c6c" stroke-width="2"/>
<rect x="1606.500" y="822.500" width="10" height="10" fill="none" stroke="#6c6c6c"/><path d="M1608,825.500h7M1608,828h7M1608,830.500h7" stroke="#6c6c6c"/>
<path d="M1636,821h7v11h-10v-8z" fill="#e0e0e0"/>
<path d="M1658,824h10M1659.500,824V834H1666.500V824M1661,821.500h4v2.500M1661.500,826V832M1663,826V832M1664.500,826V832" fill="none" stroke="#6c6c6c"/>
</g>
<rect x="1467" y="836" width="230" height="2" fill="#3a3a3a"/>
<path d="M1572,840H1591" stroke="#7a7a7a" stroke-width="4" stroke-dasharray="1 1"/>
</svg>
</body></html>
